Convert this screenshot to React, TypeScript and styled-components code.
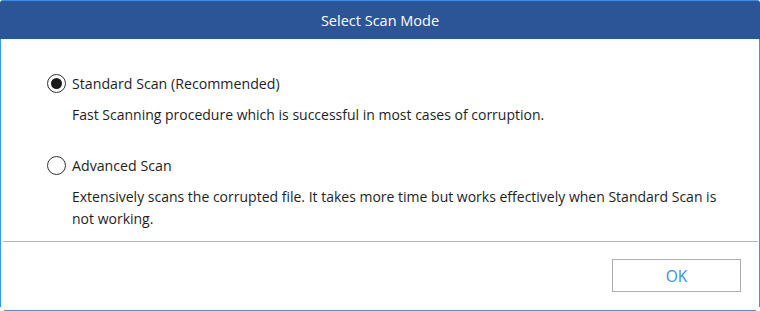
import React, { useState } from "react";
import styled, { createGlobalStyle } from "styled-components";

const Global = createGlobalStyle`
  html, body { margin: 0; padding: 0; background: #ffffff; }
  body { font-family: "Open Sans", "Noto Sans", sans-serif; }
  * { box-sizing: border-box; }
`;

const Window = styled.div`
  width: 760px;
  height: 311px;
  display: flex;
  flex-direction: column;
  background: #ffffff;
`;

const TitleBar = styled.div`
  height: 39px;
  flex: none;
  background: #2b5597;
  border-top: 1px solid #3d8fe8;
  border-radius: 3px 3px 0 0;
  display: flex;
  align-items: center;
  justify-content: center;
  color: #ffffff;
  font-size: 14.5px;
`;

const Body = styled.div`
  flex: 1;
  display: flex;
  flex-direction: column;
  border-left: 1px solid #3399ff;
  border-right: 1px solid #3399ff;
`;

const Options = styled.div`
  height: 202px;
  padding: 33px 0 0 46px;
  display: flex;
  flex-direction: column;
`;

const Option = styled.div<{ $gap: number }>`
  display: flex;
  flex-direction: column;
  margin-bottom: ${(p) => p.$gap}px;
`;

const RadioRow = styled.label`
  display: flex;
  align-items: center;
  gap: 6px;
  cursor: pointer;
  color: #1e1e1e;
  font-size: 14.2px;
  height: 22px;
`;

const RadioCircle = styled.span<{ $checked: boolean }>`
  width: 19px;
  height: 19px;
  border-radius: 50%;
  border: 1px solid #333333;
  display: flex;
  align-items: center;
  justify-content: center;
  flex: none;
  &::after {
    content: "";
    width: 11px;
    height: 11px;
    border-radius: 50%;
    background: #1a1a1a;
    display: ${(p) => (p.$checked ? "block" : "none")};
  }
`;

const Description = styled.div`
  margin-top: 10px;
  padding-left: 25px;
  width: 675px;
  color: #1e1e1e;
  font-size: 14px;
  line-height: 22px;
`;

const Separator = styled.div`
  height: 1px;
  background: #b4b4b4;
  margin: 0 1px 0 2px;
`;

const Footer = styled.div`
  flex: 1;
  display: flex;
  justify-content: flex-end;
  align-items: flex-start;
  padding: 17px 18px 0 0;
`;

const OkButton = styled.button`
  width: 129px;
  height: 33px;
  border: 1px solid #adadad;
  background: #ffffff;
  color: #3a8ee6;
  font-family: "Open Sans", "Noto Sans", sans-serif;
  font-size: 15.5px;
  cursor: pointer;
`;

const BottomGap = styled.div`
  height: 3px;
  flex: none;
`;

const BottomLine = styled.div`
  height: 1px;
  flex: none;
  background: #3399ff;
  margin: 0 4px 0 4px;
`;

export default function App() {
  const [mode, setMode] = useState<"standard" | "advanced">("standard");
  return (
    <>
      <Global />
      <Window>
        <TitleBar>Select Scan Mode</TitleBar>
        <Body>
          <Options>
            <Option $gap={28}>
              <RadioRow onClick={() => setMode("standard")}>
                <RadioCircle $checked={mode === "standard"} />
                Standard Scan (Recommended)
              </RadioRow>
              <Description>
                Fast Scanning procedure which is successful in most cases of corruption.
              </Description>
            </Option>
            <Option $gap={0}>
              <RadioRow onClick={() => setMode("advanced")}>
                <RadioCircle $checked={mode === "advanced"} />
                Advanced Scan
              </RadioRow>
              <Description>
                Extensively scans the corrupted file. It takes more time but works effectively when Standard Scan is not working.
              </Description>
            </Option>
          </Options>
          <Separator />
          <Footer>
            <OkButton>OK</OkButton>
          </Footer>
        </Body>
        <BottomGap />
        <BottomLine />
      </Window>
    </>
  );
}
